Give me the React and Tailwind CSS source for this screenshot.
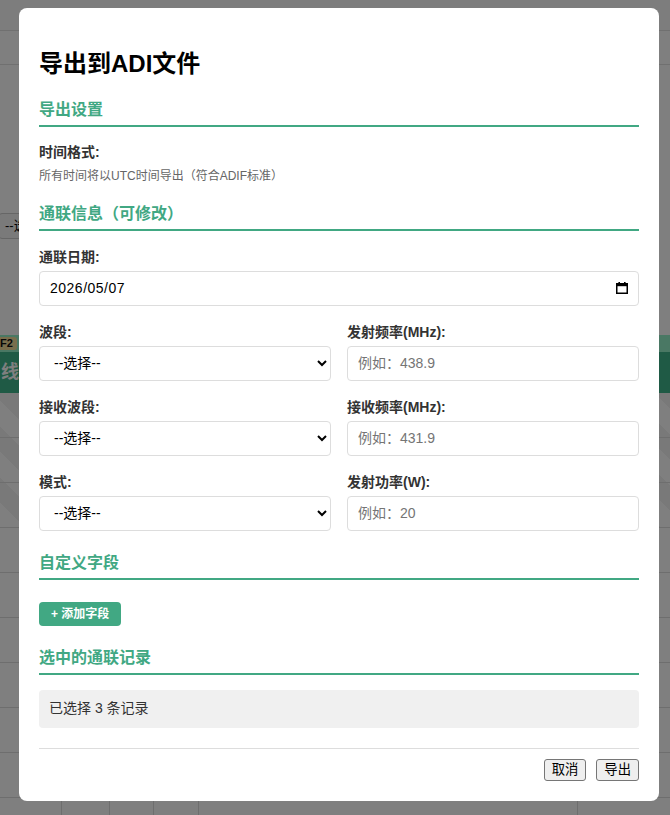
import React from 'react'

const font = { fontFamily: '"Liberation Sans", "Noto Sans CJK SC", sans-serif' }

const SectionTitle = ({ children, className = '' }) => (
  <h3 className={`text-[16px] leading-[20px] font-bold text-[#41a883] pb-[5px] border-b-2 border-[#41a883] ${className}`}>
    {children}
  </h3>
)

const Label = ({ children, className = '' }) => (
  <label className={`block text-[14px] leading-[20px] font-bold text-[#333] ${className}`}>{children}</label>
)

const Select = () => (
  <select className="mt-[4px] block w-full h-[35px] px-[10px] border border-[#ddd] rounded-[4px] bg-white text-[14px] text-black">
    <option>--选择--</option>
  </select>
)

const TextInput = ({ placeholder }) => (
  <input
    type="text"
    placeholder={placeholder}
    className="mt-[4px] block w-full h-[35px] px-[10px] border border-[#ddd] rounded-[4px] bg-white text-[14px] text-black placeholder:text-[#757575] outline-none"
  />
)

const CalendarIcon = () => (
  <svg width="12" height="12" viewBox="0 0 12 12" className="shrink-0">
    <rect x="0.75" y="1.75" width="10.5" height="9.5" fill="none" stroke="#000" strokeWidth="1.5" />
    <rect x="0" y="1" width="12" height="3.2" fill="#000" />
    <rect x="2.4" y="0" width="1.6" height="2" fill="#000" />
    <rect x="8" y="0" width="1.6" height="2" fill="#000" />
  </svg>
)

// the page that sits under the modal overlay
const Backdrop = () => {
  const rows = Array.from({ length: 7 })
  return (
    <div className="w-full min-h-[815px] bg-white">
      <div className="h-[31px] bg-[#fafafa] border-b border-[#e0e0e0]" />
      <div className="h-[34px] border-b border-[#e0e0e0]" />
      <div className="h-[148px]" />
      <div className="h-[26px] w-[160px] -ml-[2px] border border-[#ccc] rounded-[4px] bg-[#f4f4f4] flex items-center pl-[6px] text-[13px] text-black">
        --选择--
      </div>
      <div className="h-[96px]" />
      <div className="h-[17px] bg-[#94f0c8] flex items-center">
        <span className="ml-[-4px] px-[4px] h-[13px] leading-[13px] rounded-[3px] bg-[#f2dc98] text-[11px] font-bold text-[#111]">F2</span>
      </div>
      <div className="h-[41px] bg-[#3eb48a] flex items-center text-[18px] font-bold text-white">
        <span className="pl-[1px]">线</span>
      </div>
      <div className="bg-[repeating-linear-gradient(45deg,#ffffff_0px,#ffffff_18px,#f3f3f3_18px,#f3f3f3_36px)]">
        <div className="h-[45px] border-b border-[#ddd]" />
        <div className="h-[45px] border-b border-[#ddd]" />
        <div className="h-[45px] border-b border-[#ddd]" />
      </div>
      {rows.map((_, i) => (
        <div key={i} className="h-[45px] border-b border-[#ddd] flex">
          <div className="w-[62px] border-r border-[#ddd]" />
          <div className="w-[48px] border-r border-[#ddd]" />
          <div className="w-[44px] border-r border-[#ddd]" />
          <div className="w-[45px] border-r border-[#ddd]" />
          <div className="w-[379px] border-r border-[#ddd]" />
          <div className="flex-1" />
        </div>
      ))}
    </div>
  )
}

export default function App() {
  return (
    <div style={font} className="relative w-[670px] h-[815px] overflow-hidden">
      <Backdrop />

      <div className="absolute inset-0 bg-black/50">
        <div className="absolute left-[19px] top-[8px] w-[640px] h-[793px] bg-white rounded-[8px] px-[20px] pt-[20px] pb-[20px] flex flex-col">
          <h2 className="mt-[20px] text-[24px] leading-[32px] font-bold text-black">导出到ADI文件</h2>

          <SectionTitle className="mt-[20px]">导出设置</SectionTitle>
          <Label className="mt-[15px]">时间格式:</Label>
          <p className="mt-[6px] text-[12px] leading-[16px] text-[#666]">所有时间将以UTC时间导出（符合ADIF标准）</p>

          <SectionTitle className="mt-[20px]">通联信息（可修改）</SectionTitle>
          <Label className="mt-[16px]">通联日期:</Label>
          <div className="mt-[4px] h-[35px] border border-[#ddd] rounded-[4px] px-[10px] flex items-center justify-between">
            <span className="text-[14px] text-black tracking-[0.5px]">2026/05/07</span>
            <CalendarIcon />
          </div>

          <div className="grid grid-cols-2 gap-x-[16px] gap-y-[16px] mt-[16px]">
            <div>
              <Label>波段:</Label>
              <Select />
            </div>
            <div>
              <Label>发射频率(MHz):</Label>
              <TextInput placeholder="例如：438.9" />
            </div>
            <div>
              <Label>接收波段:</Label>
              <Select />
            </div>
            <div>
              <Label>接收频率(MHz):</Label>
              <TextInput placeholder="例如：431.9" />
            </div>
            <div>
              <Label>模式:</Label>
              <Select />
            </div>
            <div>
              <Label>发射功率(W):</Label>
              <TextInput placeholder="例如：20" />
            </div>
          </div>

          <SectionTitle className="mt-[22px]">自定义字段</SectionTitle>
          <div className="mt-[21px]">
            <button className="h-[24px] px-[12px] rounded-[4px] bg-[#41a883] text-white text-[12px] font-bold">
              + 添加字段
            </button>
          </div>

          <SectionTitle className="mt-[22px]">选中的通联记录</SectionTitle>
          <div className="mt-[15px] h-[39px] rounded-[4px] bg-[#f0f0f0] px-[10px] flex items-center text-[14px] text-[#333]">
            已选择 3 条记录
          </div>

          <div className="mt-[20px] border-t border-[#ddd] pt-[10px] flex justify-end gap-[10px]">
            <button className="h-[22px] px-[7px] border border-[#767676] rounded-[3px] bg-[#efefef] text-[13.33px] leading-[20px] text-black">
              取消
            </button>
            <button className="h-[22px] px-[7px] border border-[#767676] rounded-[3px] bg-[#efefef] text-[13.33px] leading-[20px] text-black">
              导出
            </button>
          </div>
        </div>
      </div>
    </div>
  )
}
